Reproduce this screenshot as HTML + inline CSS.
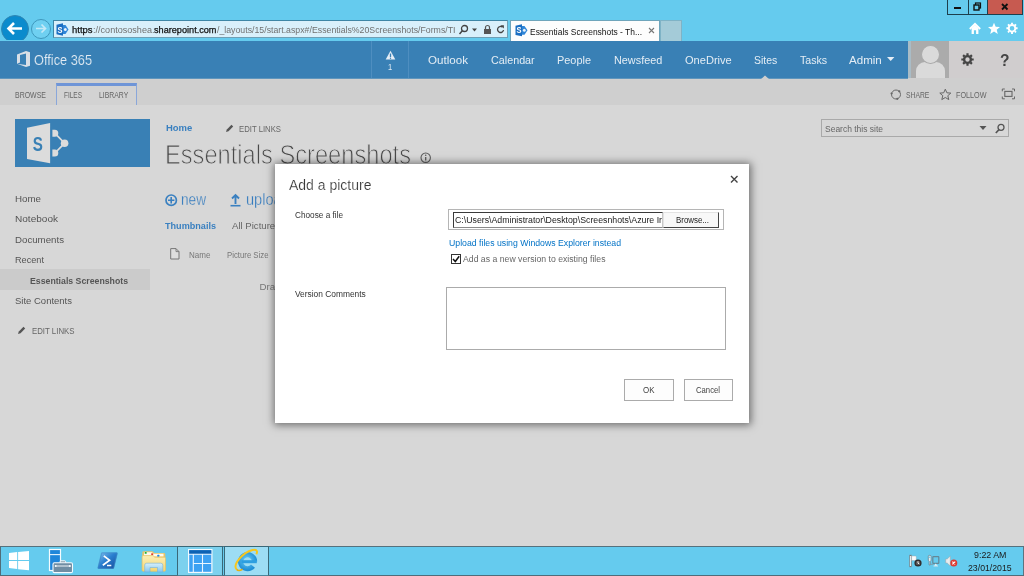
<!DOCTYPE html>
<html><head><meta charset="utf-8"><title>Essentials Screenshots</title>
<style>
*{box-sizing:border-box;margin:0;padding:0}
html,body{width:1024px;height:576px;overflow:hidden;background:#d7d7d7;font-family:"Liberation Sans","DejaVu Sans",sans-serif;}
.a{position:absolute}
.t{position:absolute;white-space:nowrap;line-height:1;transform-origin:0 50%}
svg{position:absolute;overflow:visible}
#chrome{left:0;top:0;width:1024px;height:41px;background:#65cbee}
#o365{left:0;top:41px;width:908px;height:37px;background:#3980b5}
#ribbon{left:0;top:78px;width:1024px;height:27px;background:#cfcfcf}
#task{left:0;top:546px;width:1024px;height:30px;background:#65cbee;border-top:1px solid #55717d;border-bottom:1px solid #4f6d7a}
#root{position:absolute;left:0;top:0;width:1024px;height:576px;will-change:transform;overflow:hidden}
</style></head><body><div id="root">
<!-- browser chrome -->
<div class="a" id="chrome"></div>
<div class="a" style="left:947px;top:0;width:21px;height:15px;border:1px solid #1d3f4d;border-top:0;border-right:0"></div>
<div class="a" style="left:968px;top:0;width:19px;height:15px;border:1px solid #1d3f4d;border-top:0;border-right:0"></div>
<div class="a" style="left:987px;top:0;width:36px;height:15px;background:#c75a50;border:1px solid #1d3f4d;border-top:0;"></div>
<div class="a" style="left:954px;top:7px;width:7px;height:2px;background:#111"></div>
<svg style="left:973px;top:2px" width="10" height="10"><rect x="2.5" y="1" width="5" height="5" fill="none" stroke="#111" stroke-width="1.2"/><rect x="1" y="3" width="5" height="5" fill="#65cbee" stroke="#111" stroke-width="1.4"/></svg>
<svg style="left:1001px;top:3px" width="8" height="8"><path d="M1 1L6.5 6.5M6.5 1L1 6.5" stroke="#111" stroke-width="1.8"/></svg>
<!-- back / fwd -->
<div class="a" style="left:0;top:14px;width:31px;height:26px;overflow:hidden"><div class="a" style="left:1px;top:1px;width:28px;height:28px;border-radius:50%;background:#0b8bcd;border:1px solid #2f86b3"></div></div>
<svg style="left:6px;top:21px" width="18" height="16"><path d="M8 2L2.5 7.5L8 13M3 7.5H16" fill="none" stroke="#fff" stroke-width="2.6"/></svg>
<div class="a" style="left:31px;top:18.500px;width:20px;height:20px;border-radius:50%;background:#6fd0f1;border:1px solid #3f98bd"></div>
<svg style="left:34px;top:23px" width="14" height="12"><path d="M7.500 1.500L11.500 5.500L7.500 9.500M11 5.500H2" fill="none" stroke="#c4e9f7" stroke-width="1.700"/></svg>
<!-- address bar -->
<div class="a" style="left:53px;top:20px;width:455px;height:18px;background:#d9f0fb;border:1px solid #6f9fb5;border-top-color:#3e86a6;border-left-color:#3e86a6"></div>
<svg style="left:56px;top:23px" width="13" height="13" viewBox="0 0.300 13 11.400" preserveAspectRatio="none" ><path d="M0.500 1.800L7 0.500V11.500L0.500 10.200z" fill="#1b6ec2"/><path d="M7 2H9.500L12.500 6L9.500 10H7z" fill="#2f86d8"/><circle cx="9.300" cy="6" r="1.400" fill="#e8f2fb"/><text x="1.600" y="8.900" font-size="7.500" font-weight="700" fill="#fff" font-family="Liberation Sans, sans-serif">S</text></svg>
<svg style="left:458px;top:24px" width="50" height="12">
<circle cx="6.5" cy="4.5" r="3" fill="none" stroke="#444" stroke-width="1.3"/><path d="M4.3 6.8L1.5 10" stroke="#444" stroke-width="1.5"/>
<path d="M14 4.5h5l-2.5 3z" fill="#444"/>
<rect x="26" y="5" width="7" height="5" fill="#555"/><path d="M27.5 5V3.5a2 2 0 0 1 4 0V5" fill="none" stroke="#555" stroke-width="1.2"/>
<path d="M44.5 3.2A3 3 0 1 0 45.5 6" fill="none" stroke="#444" stroke-width="1.3"/><path d="M42.5 1.2h3.4v3.4z" fill="#444"/>
</svg>
<!-- tab -->
<div class="a" style="left:510px;top:20px;width:150px;height:21px;background:#fdfdfd;border:1px solid #6fa5bb;border-bottom:0"></div>
<svg style="left:515px;top:24.200px" width="13" height="12.600" viewBox="0 0.300 13 11.400" preserveAspectRatio="none"><path d="M0.500 1.800L7 0.500V11.500L0.500 10.200z" fill="#1b6ec2"/><path d="M7 2H9.500L12.500 6L9.500 10H7z" fill="#2f86d8"/><circle cx="9.300" cy="6" r="1.400" fill="#e8f2fb"/><text x="1.600" y="8.900" font-size="7.500" font-weight="700" fill="#fff" font-family="Liberation Sans, sans-serif">S</text></svg>
<svg style="left:648px;top:27px" width="8" height="8"><path d="M1 1L6 6M6 1L1 6" stroke="#777" stroke-width="1.1"/></svg>
<div class="a" style="left:660px;top:20px;width:22px;height:21px;background:#a4cbd8;border:1px solid #7fb3c6;border-bottom:0"></div>
<!-- home star gear -->
<svg style="left:969px;top:22px" width="50" height="14">
<path d="M0.800 7L6 1.800L11.200 7" fill="none" stroke="#fff" stroke-width="1.800" stroke-linejoin="miter"/><path d="M2.600 6L6 2.800L9.400 6V12H7.100V8.300H4.900V12H2.600z" fill="#fff"/>
<path d="M25 0.800l1.700 3.900l4.300.3l-3.300 2.800l1.100 4.200l-3.800-2.400l-3.800 2.400l1.100-4.200l-3.300-2.800l4.300-.3z" fill="#fff"/>
<g transform="translate(43,6.300)"><circle r="3.300" fill="none" stroke="#fff" stroke-width="1.900"/><g stroke="#fff" stroke-width="1.900"><path d="M0-5.600V-3.800M0 5.600V3.800M-5.600 0H-3.800M5.600 0H3.800M-4-4L-2.800-2.800M4 4L2.800 2.800M-4 4L-2.800 2.800M4-4L2.800-2.800"/></g></g>
</svg>

<!-- Office 365 bar -->
<div class="a" id="o365"></div>
<svg style="left:16px;top:50px" width="15" height="19"><path d="M1 4.5L10 1L14 2.2V15.8L10 17L1 13.8L10 15V3.5L4 5V12.5L1 13.8z" fill="#d9dfe7"/></svg>
<div class="a" style="left:371px;top:41px;width:1px;height:37px;background:#4e8ec0"></div>
<div class="a" style="left:408px;top:41px;width:1px;height:37px;background:#4e8ec0"></div>
<svg style="left:385px;top:49.800px" width="11" height="11"><path d="M5.5 0.8L10.3 9.6H0.7z" fill="#e6eef6"/><path d="M5.5 3.5V7" stroke="#3980b5" stroke-width="1.3"/><circle cx="5.5" cy="8.3" r=".7" fill="#3980b5"/></svg>
<svg style="left:887px;top:57px" width="8" height="5"><path d="M0 0h7.4L3.7 4z" fill="#e6eef6"/></svg>
<div class="a" style="left:908px;top:41px;width:3px;height:37px;background:#a9bcc6"></div>
<div class="a" style="left:911px;top:41px;width:38px;height:37px;background:#ababab;overflow:hidden">
  <div class="a" style="left:5px;top:21px;width:29px;height:30px;border-radius:9px 9px 0 0;background:#dadada"></div>
  <div class="a" style="left:10px;top:3.500px;width:18.500px;height:19px;border-radius:50%;background:#dadada;border:1.500px solid #ababab"></div>
</div>
<div class="a" style="left:949px;top:41px;width:75px;height:37px;background:#d0cdce"></div>
<svg style="left:961px;top:53px" width="13" height="13"><g transform="translate(6.5,6.5)"><circle r="3.4" fill="none" stroke="#444" stroke-width="2.4"/><g stroke="#444" stroke-width="2.2"><path d="M0-6.2V-4M0 6.2V4M-6.2 0H-4M6.2 0H4M-4.4-4.4L-3-3M4.4 4.4L3 3M-4.4 4.4L-3 3M4.4-4.4L3-3"/></g></g></svg>

<!-- ribbon -->
<div class="a" id="ribbon"></div>
<div class="a" style="left:0;top:78px;width:908px;height:1px;background:#6096bd"></div>
<svg style="left:760px;top:74.500px" width="10" height="5"><path d="M0.500 4.500L5 0.500L9.500 4.500z" fill="#cfcfcf"/></svg>
<div class="a" style="left:56px;top:83px;width:81px;height:22px;border:1px solid #8aa7da;border-top:3px solid #6f95d7;border-bottom:0;background:#d2d2d2"></div>
<svg style="left:890px;top:88px" width="130" height="13">
<circle cx="6" cy="6.500" r="4.500" fill="none" stroke="#6a6a6a" stroke-width="1"/><circle cx="9.300" cy="3.300" r="1.100" fill="#666"/><circle cx="7.300" cy="10.800" r="1.100" fill="#666"/><circle cx="1.600" cy="5.600" r="1.100" fill="#666"/>
<path d="M55.3 1.2l1.6 3.6l3.9.3l-3 2.6l1 3.9l-3.5-2.1l-3.5 2.1l1-3.9l-3-2.6l3.9-.3z" fill="none" stroke="#666" stroke-width="1"/>
<path d="M112.300 3.300V1h2.500M122 1h2.500v2.300M124.500 8.500V10.800h-2.500M114.800 10.800h-2.500V8.500" fill="none" stroke="#666" stroke-width="1"/><rect x="114.800" y="3.400" width="7.200" height="5" fill="none" stroke="#666" stroke-width="1.100"/>
</svg>

<!-- page content -->
<div class="a" style="left:15px;top:119px;width:135px;height:48px;background:#3980b5"></div>
<svg style="left:27px;top:122px" width="44" height="42">
<path d="M0 5.700L23.100 1V41.300L0 37.100z" fill="#dcdcdc"/>
<path d="M28 11.300L37.600 21.200L28 31" fill="none" stroke="#dcdcdc" stroke-width="1.700"/>
<path d="M25.400 7.800H27.800A3.500 3.500 0 0 1 27.800 14.800H25.400z" fill="#dcdcdc"/>
<path d="M25.400 27.500H27.800A3.500 3.500 0 0 1 27.800 34.500H25.400z" fill="#dcdcdc"/>
<circle cx="37.600" cy="21.200" r="3.800" fill="#dcdcdc"/>
<text x="0" y="0" transform="translate(5.800,28.700) scale(.74,1)" font-size="20.500" font-weight="700" fill="#3980b5" font-family="Liberation Sans, sans-serif">S</text>
</svg>
<svg style="left:225px;top:124px" width="9" height="9"><path d="M1 8L1.800 5.500L6.500 0.800L8.200 2.500L3.500 7.200z" fill="#555"/></svg>
<svg style="left:17px;top:326px" width="9" height="9"><path d="M1 8L1.800 5.500L6.500 0.800L8.200 2.500L3.500 7.200z" fill="#555"/></svg>
<svg style="left:420px;top:151.500px" width="12" height="12"><circle cx="5.700" cy="5.700" r="4.700" fill="none" stroke="#5c5c5c" stroke-width="1.100"/><path d="M5.700 5V8.600" stroke="#5c5c5c" stroke-width="1.300"/><circle cx="5.700" cy="3.300" r=".8" fill="#5c5c5c"/></svg>
<div class="a" style="left:0;top:269px;width:150px;height:21px;background:#cbcbcb"></div>
<!-- search -->
<div class="a" style="left:821px;top:119px;width:188px;height:18px;border:1px solid #a9a9a9;background:#d7d7d7"></div>
<svg style="left:978px;top:123px" width="30" height="11"><path d="M1.500 3h7L5 7z" fill="#555"/><circle cx="23" cy="4.300" r="3" fill="none" stroke="#555" stroke-width="1.300"/><path d="M21 6.600L17.800 10" stroke="#555" stroke-width="1.600"/></svg>
<!-- new / upload icons -->
<svg style="left:165px;top:194px" width="13" height="13"><circle cx="6.200" cy="6.200" r="5.200" fill="none" stroke="#3a80c0" stroke-width="1.700"/><path d="M6.200 3V9.400M3 6.200H9.400" stroke="#3a80c0" stroke-width="1.600"/></svg>
<svg style="left:230px;top:193px" width="12" height="14"><path d="M5.500 11V2M2 5.500L5.500 2L9 5.500" fill="none" stroke="#3a80c0" stroke-width="1.900"/><path d="M0.500 12.700H10.500" stroke="#3a80c0" stroke-width="1.600"/></svg>
<svg style="left:170px;top:248px" width="10" height="12"><path d="M0.700 0.600H6L9 3.600V11H0.700z" fill="#dedede" stroke="#777" stroke-width="1"/><path d="M6 0.600V3.600H9" fill="none" stroke="#777" stroke-width=".9"/></svg>
<!-- taskbar -->
<div class="a" id="task"></div>
<!-- start -->
<div class="a" style="left:0;top:547px;width:1px;height:28px;background:#4f6d7a"></div>
<div class="a" style="left:1023px;top:547px;width:1px;height:28px;background:#5b7480"></div>
<svg style="left:8.900px;top:551px" width="21" height="20"><path d="M0 2L8.200 1V9.100H0zM9.100 0.900L20 0V9.100H9.100zM0 10H8.200V18.100L0 17zM9.100 10H20V19.200L9.100 18.200z" fill="#fff"/></svg>
<!-- server manager -->
<svg style="left:48px;top:548px" width="26" height="26">
<rect x="1.500" y="1.500" width="11" height="21" fill="#1e86da" stroke="#f4fbff" stroke-width="1.200"/>
<path d="M2 6.600H12" stroke="#e6f4fd" stroke-width="1.100"/>
<rect x="12.200" y="12.800" width="5.400" height="3" rx=".8" fill="#8296a4" stroke="#f4fbff" stroke-width="1"/>
<rect x="5" y="14.800" width="19.500" height="9.800" rx="1.400" fill="#6f8da3" stroke="#f4fbff" stroke-width="1.100"/>
<path d="M7 18H22.500" stroke="#e4ecf1" stroke-width="1.100"/><circle cx="7.700" cy="18" r="1" fill="#f4fbff"/><circle cx="21.800" cy="18" r="1" fill="#f4fbff"/>
</svg>
<!-- powershell -->
<svg style="left:97px;top:552px" width="22" height="18">
<defs><linearGradient id="pg" x1="0" y1="0" x2="1" y2="1"><stop offset="0" stop-color="#7cbdec"/><stop offset=".45" stop-color="#2a7fd0"/><stop offset="1" stop-color="#174e9c"/></linearGradient></defs>
<path d="M5.200 1.500H19.500L16 15.800H1.700z" fill="url(#pg)" stroke="url(#pg)" stroke-width="1.800" stroke-linejoin="round"/>
<path d="M5.200 1.500H19.500L16 15.800H1.700z" fill="none" stroke="#3c86c4" stroke-opacity=".55" stroke-width="2.600" stroke-linejoin="round"/>
<path d="M5.200 1.500H19.500L16 15.800H1.700z" fill="url(#pg)"/>
<path d="M6.800 3.800L12.600 8.300L5.800 13.300" fill="none" stroke="#fff" stroke-width="1.700"/><path d="M10 13.500H14.300" stroke="#fff" stroke-width="1.500"/>
</svg>
<!-- explorer -->
<svg style="left:141px;top:550px" width="26" height="23">
<defs><linearGradient id="fg" x1="0" y1="0" x2="0" y2="1"><stop offset="0" stop-color="#fbefb8"/><stop offset="1" stop-color="#f6d66f"/></linearGradient>
<linearGradient id="sg" x1="0" y1="0" x2="0" y2="1"><stop offset="0" stop-color="#d6f0fc"/><stop offset="1" stop-color="#86c6ec"/></linearGradient></defs>
<path d="M1.300 2.500Q1.300 1.200 2.600 1.200H11.500L13.500 3H23Q24.300 3 24.300 4.300V8H1.300z" fill="#e9c468"/>
<path d="M3 2.200H11L12.500 3.800H22.500V6.500H3z" fill="#fdfaf0"/>
<rect x="3.700" y="1.900" width="2" height="1.900" rx=".5" fill="#21b035"/><rect x="10.200" y="3.300" width="2" height="1.900" rx=".5" fill="#dc3f2e"/><rect x="16.300" y="4.800" width="2" height="1.900" rx=".5" fill="#1e8bea"/>
<path d="M1.100 6.800Q1.100 5.600 2.300 5.600H12L13.800 7.200H23.300Q24.500 7.200 24.500 8.400V20Q24.500 21.200 23.300 21.200H2.300Q1.100 21.200 1.100 20z" fill="url(#fg)" stroke="#e6c15e" stroke-width=".7"/>
<path d="M3.700 22V15.200Q3.700 13.200 5.700 13.200H19.800Q21.800 13.200 21.800 15.200V22H16.500V17.500H9V22z" fill="url(#sg)" stroke="#73b4df" stroke-width=".6"/>
</svg>
<!-- active buttons -->
<div class="a" style="left:177px;top:546px;width:46px;height:30px;background:#7cd1ee;border-left:1px solid #3a6878;border-right:1px solid #3a6878;border-top:1px solid #3a6878;border-bottom:1px solid #4d8599"></div>
<div class="a" style="left:224px;top:546px;width:45px;height:30px;background:#9dddf4;border-left:1px solid #3a6878;border-right:1px solid #3a6878;border-top:1px solid #3a6878;border-bottom:1px solid #4d8599"></div>
<svg style="left:188px;top:549px" width="25" height="25">
<rect x=".6" y=".6" width="23.300" height="22.800" fill="#3da1f2" stroke="#f2faff" stroke-width="1.200"/>
<rect x="1.200" y="1.200" width="22.100" height="3.800" fill="#0c62b4"/>
<path d="M1 5.300H23.500M5.300 5.300V23.500M14.500 5.300V23.500M5.300 14.500H23.500" stroke="#eaf6ff" stroke-width="1.100"/>
</svg>
<!-- IE -->
<svg style="left:233px;top:547px" width="30" height="28">
<defs><radialGradient id="ieg" cx=".45" cy=".4" r=".7"><stop offset="0" stop-color="#6fd0f7"/><stop offset="1" stop-color="#1f8fd6"/></radialGradient></defs>
<path d="M21.600 14.600A7 7 0 1 0 20 19.200" fill="none" stroke="url(#ieg)" stroke-width="5.200"/>
<path d="M8.500 14.700H23.800" stroke="#2d9fe0" stroke-width="3"/>
<path d="M3.600 22.300C-0.500 18 9.500 5.500 19.500 3C24 2 24.800 4.500 23.300 7.300" fill="none" stroke="#f6c61e" stroke-width="2"/>
<path d="M3.600 22.300C5 24.300 8 23.300 9.500 22.300" fill="none" stroke="#eab010" stroke-width="1.700"/>
</svg>
<!-- tray -->
<svg style="left:908px;top:554px" width="52" height="15">
<rect x="1.700" y="1.200" width="1.900" height="11.600" fill="#eef2f3" stroke="#707c81" stroke-width=".7"/>
<path d="M3.600 2H7.500Q8.600 2.400 8.300 4L8 6.500H3.600z" fill="#fbfbfb" stroke="#9aa5a9" stroke-width=".4"/>
<circle cx="10" cy="9" r="3.600" fill="#2e2a2a"/><circle cx="10" cy="9" r="2.300" fill="#5a5656"/><path d="M10 7.300V9.200L11.300 10" stroke="#fff" stroke-width=".9" fill="none"/>
<path d="M20.300 2.200Q20.300 1.300 21.700 1.300Q23.100 1.300 23.100 2.200V6.300L22.300 7.200V11H21.100V7.200L20.300 6.300z" fill="#e4eff4" stroke="#668896" stroke-width=".8"/>
<circle cx="21.700" cy="3.300" r=".8" fill="#65cbee"/>
<rect x="24.800" y="2.700" width="6" height="6.600" rx=".6" fill="none" stroke="#648896" stroke-width="1.200"/>
<path d="M22.300 10.300H25.500" stroke="#7f9ba6" stroke-width=".9"/>
<path d="M26.300 11.800L27.800 9.600L29.300 11.800z" fill="#f2f6f7"/><path d="M25.500 12H30" stroke="#dfe8ea" stroke-width=".9"/>
<path d="M37.700 5H39.200L42.300 2V12L39.200 9H37.700z" fill="#e9ecee" stroke="#9aa3a6" stroke-width=".5"/>
<circle cx="45.800" cy="9" r="3.500" fill="#dc3a30"/><path d="M44.400 7.600L47.200 10.400M47.200 7.600L44.400 10.400" stroke="#fff" stroke-width="1.200"/>
</svg>

<span class="t" id="t0" style="left:72.0px;top:25.6px;font-size:9px;color:#111;font-weight:400;transform:scaleX(1.0504);-webkit-text-stroke:0.25px #111;">https</span>
<span class="t" id="t1" style="left:92.5px;top:25.6px;font-size:9px;color:#707070;font-weight:400;transform:scaleX(1.0074);">://contososhea.</span>
<span class="t" id="t2" style="left:154.0px;top:25.6px;font-size:9px;color:#111;font-weight:400;transform:scaleX(1.0155);-webkit-text-stroke:0.25px #111;">sharepoint.com</span>
<span class="t" id="t3" style="left:216.5px;top:25.6px;font-size:9px;color:#707070;font-weight:400;transform:scaleX(0.9730);">/_layouts/15/start.aspx#/Essentials%20Screenshots/Forms/TI</span>
<span class="t" id="t4" style="left:530.0px;top:27.0px;font-size:9.4px;color:#111;font-weight:400;transform:scaleX(0.9005);">Essentials Screenshots - Th...</span>
<span class="t" id="t5" style="left:34.0px;top:53.0px;font-size:14.4px;color:#e3ebf3;font-weight:400;transform:scaleX(0.8876);-webkit-text-stroke:0.15px #3980b5;">Office 365</span>
<span class="t" id="t6" style="left:387.8px;top:62.7px;font-size:8.6px;color:#dfe9f2;font-weight:400;transform:scaleX(0.8784);">1</span>
<span class="t" id="t7" style="left:428.4px;top:54.9px;font-size:11.25px;color:#e4edf5;font-weight:400;transform:scaleX(1.0314);">Outlook</span>
<span class="t" id="t8" style="left:491.0px;top:54.9px;font-size:11.25px;color:#e4edf5;font-weight:400;transform:scaleX(0.9572);">Calendar</span>
<span class="t" id="t9" style="left:557.0px;top:54.9px;font-size:11.25px;color:#e4edf5;font-weight:400;transform:scaleX(0.9706);">People</span>
<span class="t" id="t10" style="left:613.8px;top:54.9px;font-size:11.25px;color:#e4edf5;font-weight:400;transform:scaleX(0.9644);">Newsfeed</span>
<span class="t" id="t11" style="left:684.7px;top:54.9px;font-size:11.25px;color:#e4edf5;font-weight:400;transform:scaleX(0.9846);">OneDrive</span>
<span class="t" id="t12" style="left:753.8px;top:54.9px;font-size:11.25px;color:#e4edf5;font-weight:400;transform:scaleX(0.9274);">Sites</span>
<span class="t" id="t13" style="left:799.5px;top:54.9px;font-size:11.25px;color:#e4edf5;font-weight:400;transform:scaleX(0.9456);">Tasks</span>
<span class="t" id="t14" style="left:848.5px;top:54.9px;font-size:11.25px;color:#e4edf5;font-weight:400;transform:scaleX(1.0285);">Admin</span>
<span class="t" id="t15" style="left:1000.2px;top:51.8px;font-size:16.5px;color:#444;font-weight:700;transform:scaleX(0.9412);">?</span>
<span class="t" id="t16" style="left:15.0px;top:92.1px;font-size:8.2px;color:#666;font-weight:400;transform:scaleX(0.8515);">BROWSE</span>
<span class="t" id="t17" style="left:64.0px;top:92.1px;font-size:8.2px;color:#666;font-weight:400;transform:scaleX(0.7907);">FILES</span>
<span class="t" id="t18" style="left:98.8px;top:92.1px;font-size:8.2px;color:#666;font-weight:400;transform:scaleX(0.8383);">LIBRARY</span>
<span class="t" id="t19" style="left:905.6px;top:90.6px;font-size:8.4px;color:#666;font-weight:400;transform:scaleX(0.8108);">SHARE</span>
<span class="t" id="t20" style="left:955.5px;top:90.6px;font-size:8.4px;color:#666;font-weight:400;transform:scaleX(0.8622);">FOLLOW</span>
<span class="t" id="t21" style="left:166.0px;top:122.7px;font-size:9.75px;color:#3a80c0;font-weight:700;transform:scaleX(0.9707);">Home</span>
<span class="t" id="t22" style="left:239.0px;top:124.9px;font-size:8.4px;color:#666;font-weight:400;transform:scaleX(0.9237);">EDIT LINKS</span>
<span class="t" id="t23" style="left:165.2px;top:141.1px;font-size:27.3px;color:#4a4a4a;font-weight:400;transform:scaleX(0.8670);-webkit-text-stroke:0.9px #d7d7d7;">Essentials Screenshots</span>
<span class="t" id="t24" style="left:825.0px;top:125.4px;font-size:9px;color:#666;font-weight:400;transform:scaleX(0.9426);">Search this site</span>
<span class="t" id="t25" style="left:15.0px;top:193.7px;font-size:9.75px;color:#555;font-weight:400;">Home</span>
<span class="t" id="t26" style="left:15.0px;top:213.7px;font-size:9.75px;color:#555;font-weight:400;transform:scaleX(1.0299);">Notebook</span>
<span class="t" id="t27" style="left:15.0px;top:234.7px;font-size:9.75px;color:#555;font-weight:400;transform:scaleX(0.9937);">Documents</span>
<span class="t" id="t28" style="left:15.0px;top:254.7px;font-size:9.75px;color:#555;font-weight:400;transform:scaleX(0.9383);">Recent</span>
<span class="t" id="t29" style="left:30.0px;top:276.2px;font-size:9.75px;color:#555;font-weight:700;transform:scaleX(0.8952);">Essentials Screenshots</span>
<span class="t" id="t30" style="left:15.0px;top:295.5px;font-size:9.75px;color:#555;font-weight:400;transform:scaleX(0.9736);">Site Contents</span>
<span class="t" id="t31" style="left:31.5px;top:326.6px;font-size:8.4px;color:#666;font-weight:400;transform:scaleX(0.9347);">EDIT LINKS</span>
<span class="t" id="t32" style="left:180.5px;top:192.0px;font-size:15.6px;color:#2f78bd;font-weight:400;transform:scaleX(0.8738);-webkit-text-stroke:0.3px #d7d7d7;">new</span>
<span class="t" id="t33" style="left:246.2px;top:192.0px;font-size:15.6px;color:#2f78bd;font-weight:400;transform:scaleX(0.9353);-webkit-text-stroke:0.3px #d7d7d7;">upload</span>
<span class="t" id="t34" style="left:165.0px;top:220.7px;font-size:9.75px;color:#3a80c0;font-weight:700;transform:scaleX(0.9320);">Thumbnails</span>
<span class="t" id="t35" style="left:231.5px;top:220.7px;font-size:9.75px;color:#666;font-weight:400;transform:scaleX(0.9843);">All Pictures</span>
<span class="t" id="t36" style="left:188.6px;top:250.9px;font-size:8.4px;color:#777;font-weight:400;transform:scaleX(0.9578);">Name</span>
<span class="t" id="t37" style="left:226.5px;top:250.9px;font-size:8.4px;color:#777;font-weight:400;transform:scaleX(0.9287);">Picture Size</span>
<span class="t" id="t38" style="left:259.5px;top:281.7px;font-size:9.75px;color:#777;font-weight:400;">Drag files here to upload</span>
<span class="t" id="t39" style="left:974.3px;top:550.1px;font-size:9.7px;color:#1a1a1a;font-weight:400;transform:scaleX(0.9143);">9:22 AM</span>
<span class="t" id="t40" style="left:968.3px;top:563.0px;font-size:9.7px;color:#1a1a1a;font-weight:400;transform:scaleX(0.9010);">23/01/2015</span>

<!-- dialog -->
<div class="a" style="left:275px;top:164px;width:474px;height:259px;background:#fff;box-shadow:0 0 8px 1.500px rgba(0,0,0,.5)"></div>
<svg style="left:729.500px;top:175.300px" width="9" height="9"><path d="M1 1L7.500 7.500M7.500 1L1 7.500" stroke="#444" stroke-width="1.400"/></svg>
<div class="a" style="left:448px;top:209px;width:276px;height:21px;border:1px solid #b5b5b5;background:#fff"></div>
<div class="a" style="left:453px;top:212px;width:210px;height:16px;border:1px solid #8a8a8a;border-top:1px solid #3a3a3a;border-left:1px solid #3a3a3a;border-right:1px solid #c8c8c8;background:#fff"></div>
<div class="a" style="left:663px;top:212px;width:56px;height:16px;border:1px solid #e3e3e3;border-right:1px solid #444;border-bottom:1px solid #444;background:#f8f8f8"></div>
<div class="a" style="left:451px;top:254px;width:10px;height:10px;border:1px solid #333;background:#fff"></div>
<svg style="left:452px;top:255px" width="9" height="9"><path d="M1 4L3.300 6.500L7.200 1.200" fill="none" stroke="#111" stroke-width="1.500"/></svg>
<div class="a" style="left:446px;top:287px;width:280px;height:63px;border:1px solid #ababab;background:#fff"></div>
<div class="a" style="left:624px;top:379px;width:50px;height:22px;border:1px solid #ababab;background:#fdfdfd"></div>
<div class="a" style="left:684px;top:379px;width:49px;height:22px;border:1px solid #ababab;background:#fdfdfd"></div>
<span class="t" id="d0" style="left:289.0px;top:177.8px;font-size:14.4px;color:#383838;font-weight:400;transform:scaleX(0.9727);-webkit-text-stroke:0.18px #fff;">Add a picture</span>
<span class="t" id="d1" style="left:295.0px;top:210.9px;font-size:8.4px;color:#333;font-weight:400;transform:scaleX(0.9818);">Choose a file</span>
<span class="t" id="d2" style="left:295.0px;top:289.9px;font-size:8.4px;color:#333;font-weight:400;">Version Comments</span>
<span class="t" id="d3" style="left:455.0px;top:215.9px;font-size:8.4px;color:#222;font-weight:400;transform:scaleX(1.0464);">C:\Users\Administrator\Desktop\Screesnhots\Azure Ir</span>
<span class="t" id="d4" style="left:676.0px;top:215.9px;font-size:8.4px;color:#222;font-weight:400;transform:scaleX(0.9450);">Browse...</span>
<span class="t" id="d5" style="left:449.0px;top:238.9px;font-size:8.4px;color:#0072c6;font-weight:400;transform:scaleX(1.0407);">Upload files using Windows Explorer instead</span>
<span class="t" id="d6" style="left:463.0px;top:254.9px;font-size:8.4px;color:#666;font-weight:400;transform:scaleX(1.0375);">Add as a new version to existing files</span>
<span class="t" id="d7" style="left:643.0px;top:385.9px;font-size:8.4px;color:#444;font-weight:400;transform:scaleX(0.9497);">OK</span>
<span class="t" id="d8" style="left:696.0px;top:385.9px;font-size:8.4px;color:#444;font-weight:400;transform:scaleX(0.9203);">Cancel</span>

</div></body></html>
